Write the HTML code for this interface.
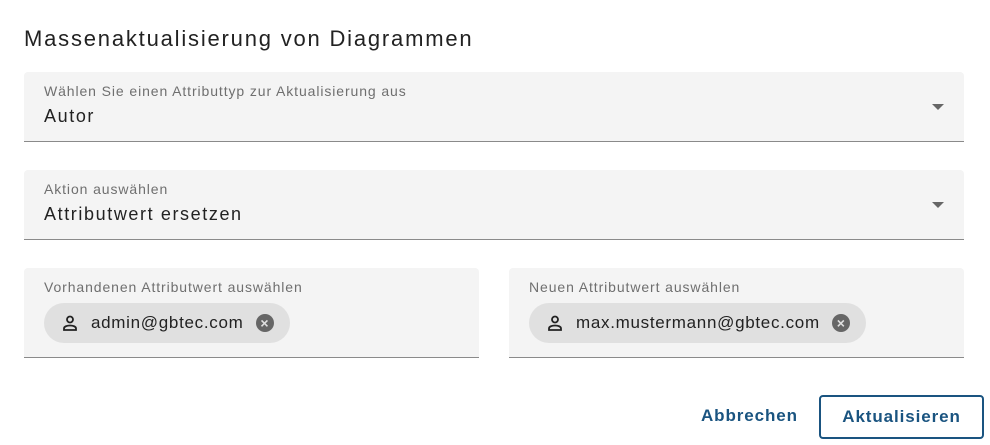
<!DOCTYPE html><html><head><style>
body{margin:0;width:990px;height:445px;background:#fff;font-family:"Liberation Sans",sans-serif;position:relative;overflow:hidden;color:#222}
.t{position:absolute;left:24px;top:26px;font-size:22px;font-weight:500;color:#222;letter-spacing:1.8px}
.f{position:absolute;background:#f4f4f4;border-bottom:1px solid #8a8a8a;border-radius:4px 4px 0 0}
.l{position:absolute;left:20px;top:11px;font-size:14px;color:#6f6f6f;letter-spacing:0.9px}
.v{position:absolute;left:20px;top:34px;font-size:18px;color:#222;letter-spacing:1.6px}
.a{position:absolute;right:20px;top:32px;width:0;height:0;border-left:6px solid transparent;border-right:6px solid transparent;border-top:6px solid #666}
.c{position:absolute;left:20px;top:35px;height:40px;border-radius:20px;background:#e0e0e0;display:flex;align-items:center;padding:0 16px 0 18px;font-size:17px;color:#222;letter-spacing:0.7px}
.c svg{margin-right:13px}
.x{margin-left:12px;width:18px;height:18px;border-radius:50%;background:#666;color:#e0e0e0;font-size:14px;line-height:18px;text-align:center;font-weight:bold;letter-spacing:0}
.b{position:absolute;font-size:17px;font-weight:bold;color:#1a5480;letter-spacing:0.9px}
</style></head><body>
<div class="t">Massenaktualisierung von Diagrammen</div>
<div class="f" style="left:24px;top:72px;width:940px;height:69px"><div class="l">Wählen Sie einen Attributtyp zur Aktualisierung aus</div><div class="v">Autor</div><div class="a"></div></div>
<div class="f" style="left:24px;top:170px;width:940px;height:69px"><div class="l">Aktion auswählen</div><div class="v">Attributwert ersetzen</div><div class="a"></div></div>
<div class="f" style="left:24px;top:268px;width:455px;height:89px"><div class="l">Vorhandenen Attributwert auswählen</div><div class="c"><svg width="16" height="16" viewBox="0 0 16 16"><circle cx="8" cy="4.5" r="3" fill="none" stroke="#222" stroke-width="1.8"/><path d="M2 15v-1.5c0-2 3-3 6-3s6 1 6 3V15z" fill="none" stroke="#222" stroke-width="1.8"/></svg>admin@gbtec.com<div class="x">×</div></div></div>
<div class="f" style="left:509px;top:268px;width:455px;height:89px"><div class="l">Neuen Attributwert auswählen</div><div class="c"><svg width="16" height="16" viewBox="0 0 16 16"><circle cx="8" cy="4.5" r="3" fill="none" stroke="#222" stroke-width="1.8"/><path d="M2 15v-1.5c0-2 3-3 6-3s6 1 6 3V15z" fill="none" stroke="#222" stroke-width="1.8"/></svg>max.mustermann@gbtec.com<div class="x">×</div></div></div>
<div class="b" style="left:701px;top:406px">Abbrechen</div>
<div class="b" style="left:819px;top:395px;width:161px;height:40px;border:2px solid #1a5480;border-radius:4px;line-height:40px;text-align:center">Aktualisieren</div>
</body></html>
